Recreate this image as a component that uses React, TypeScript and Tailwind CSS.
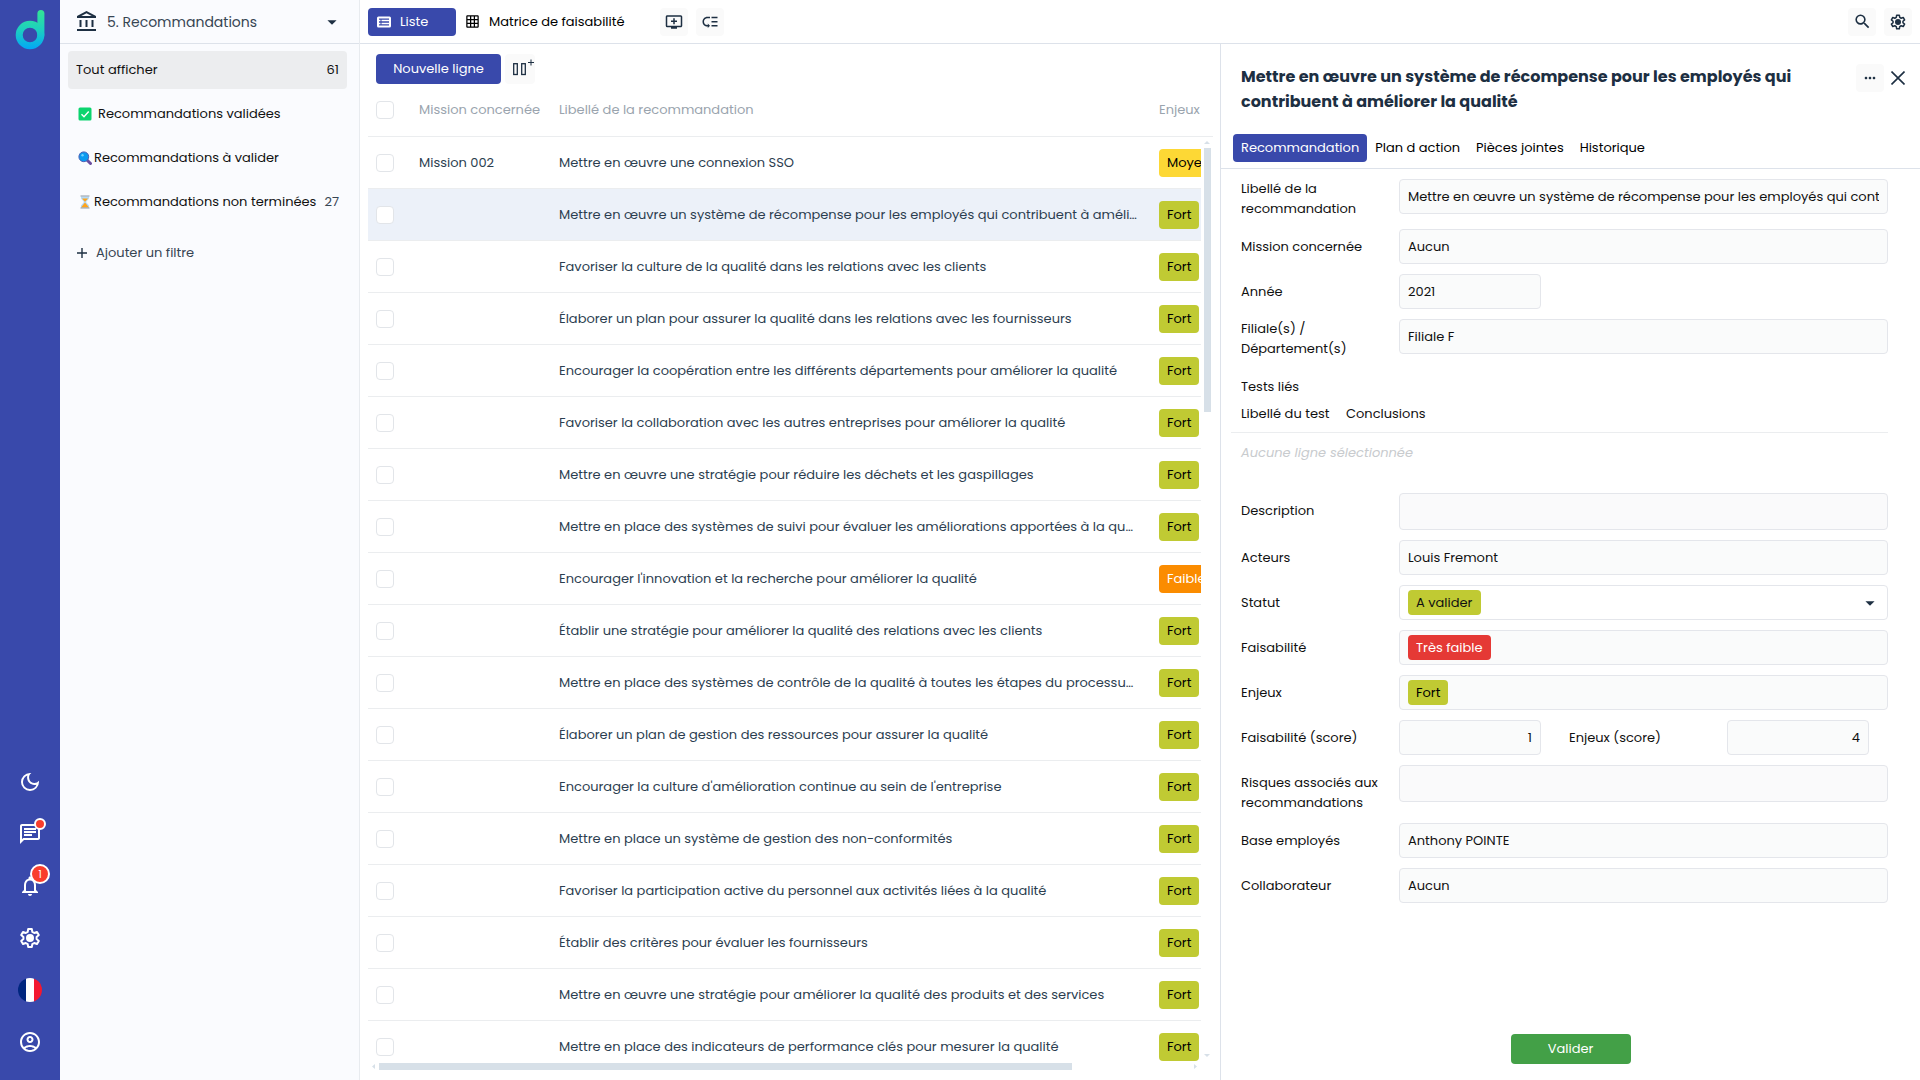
import type { ReactNode } from "react";
import {
  MdArrowDropDown,
  MdGridOn,
  MdLowPriority,
  MdMoreHoriz,
  MdNotificationsNone,
  MdOutlineAccountBalance,
  MdOutlineAccountCircle,
  MdOutlineAddToQueue,
  MdOutlineChat,
  MdOutlineDarkMode,
  MdSearch,
} from "react-icons/md";

const rows = [
  { label: "Mettre en œuvre une connexion SSO", mission: "Mission 002", stake: "Moyen" },
  { label: "Mettre en œuvre un système de récompense pour les employés qui contribuent à améliorer la qualité", stake: "Fort", selected: true },
  { label: "Favoriser la culture de la qualité dans les relations avec les clients", stake: "Fort" },
  { label: "Élaborer un plan pour assurer la qualité dans les relations avec les fournisseurs", stake: "Fort" },
  { label: "Encourager la coopération entre les différents départements pour améliorer la qualité", stake: "Fort" },
  { label: "Favoriser la collaboration avec les autres entreprises pour améliorer la qualité", stake: "Fort" },
  { label: "Mettre en œuvre une stratégie pour réduire les déchets et les gaspillages", stake: "Fort" },
  { label: "Mettre en place des systèmes de suivi pour évaluer les améliorations apportées à la qualité", stake: "Fort" },
  { label: "Encourager l'innovation et la recherche pour améliorer la qualité", stake: "Faible" },
  { label: "Établir une stratégie pour améliorer la qualité des relations avec les clients", stake: "Fort" },
  { label: "Mettre en place des systèmes de contrôle de la qualité à toutes les étapes du processus de production", stake: "Fort" },
  { label: "Élaborer un plan de gestion des ressources pour assurer la qualité", stake: "Fort" },
  { label: "Encourager la culture d'amélioration continue au sein de l'entreprise", stake: "Fort" },
  { label: "Mettre en place un système de gestion des non-conformités", stake: "Fort" },
  { label: "Favoriser la participation active du personnel aux activités liées à la qualité", stake: "Fort" },
  { label: "Établir des critères pour évaluer les fournisseurs", stake: "Fort" },
  { label: "Mettre en œuvre une stratégie pour améliorer la qualité des produits et des services", stake: "Fort" },
  { label: "Mettre en place des indicateurs de performance clés pour mesurer la qualité", stake: "Fort" },
];

const badgeColors: Record<string, string> = {
  Moyen: "bg-[#fdd835] text-black",
  Fort: "bg-[#c0ca33] text-black",
  Faible: "bg-[#fb8c00] text-white",
  "Très faible": "bg-[#e53935] text-white",
};

const fieldBox = "h-[35px] rounded border border-[#e4e6eb] bg-[#fafbfb] px-2";

function Logo() {
  return (
    <svg width="30" height="42" viewBox="0 0 30 42" fill="none">
      <defs>
        <linearGradient id="logo" x1="0" y1="0" x2="0" y2="42" gradientUnits="userSpaceOnUse">
          <stop stopColor="#35e592" />
          <stop offset="0.5" stopColor="#1ccfc0" />
          <stop offset="1" stopColor="#00a3fb" />
        </linearGradient>
      </defs>
      <circle cx="15" cy="26" r="10.8" stroke="url(#logo)" strokeWidth="7" />
      <path d="M25.9 4.5V26" stroke="url(#logo)" strokeWidth="7" strokeLinecap="round" />
    </svg>
  );
}

function GearIcon({ size }: { size: number }) {
  return (
    <svg width={size} height={size} viewBox="0 0 24 24">
      <path
        d="M10.2 3h3.6l.5 2.9 1.9 1.1 2.8-1 1.8 3.1-2.2 1.9v2l2.2 1.9-1.8 3.1-2.8-1-1.9 1.1-.5 2.9h-3.6l-.5-2.9L7.8 17 5 18l-1.8-3.1 2.2-1.9v-2L3.2 9.1 5 6l2.8 1 1.9-1.1z"
        fill="none"
        stroke="currentColor"
        strokeWidth="2"
        strokeLinejoin="round"
      />
      <circle cx="12" cy="12" r="4" fill="currentColor" />
    </svg>
  );
}

function ListIcon() {
  return (
    <svg width="14" height="12" viewBox="0 0 14 12" fill="none" stroke="currentColor">
      <rect x="1" y="1.5" width="12" height="9" rx="0.5" strokeWidth="2" />
      <path d="M4.5 4.5h8M4.5 7.5h8M1.5 4.5h2M1.5 7.5h2" strokeWidth="1.4" />
    </svg>
  );
}

function ColumnsIcon() {
  return (
    <svg width="30" height="30" viewBox="0 0 30 30" fill="none" stroke="currentColor" strokeWidth="1.3">
      <rect x="8.7" y="9.7" width="3.6" height="10.8" />
      <rect x="16.7" y="9.7" width="3.6" height="10.8" />
      <path d="M23 8.5h6M26 5.5v6" strokeWidth="1" />
    </svg>
  );
}

function CheckEmoji() {
  return (
    <svg width="14" height="14" viewBox="0 0 14 14">
      <rect x="0.5" y="0.5" width="13" height="13" rx="1.5" fill="#0bd46e" />
      <path d="M3.5 7.2 6 9.7l4.7-5.2" fill="none" stroke="#fff" strokeWidth="1.4" />
    </svg>
  );
}

function MagnifierEmoji() {
  return (
    <svg width="14" height="14" viewBox="0 0 14 14">
      <path d="m9 9 3.5 3.5" stroke="#6b4fa0" strokeWidth="3" strokeLinecap="round" />
      <circle cx="5.8" cy="5.8" r="4.9" fill="#0b9bf0" stroke="#4a5fb5" strokeWidth="1" />
      <circle cx="4.5" cy="4.3" r="1.2" fill="#6fd0ff" />
    </svg>
  );
}

function HourglassEmoji() {
  return (
    <svg width="14" height="14" viewBox="0 0 14 14">
      <path d="M3 1.5h8v2L8 7l3 3.5v2H3v-2L6 7 3 3.5z" fill="#b5daf5" />
      <path d="M4 3.5h6L7 6.8zM7 7.5l4 5H3z" fill="#ffa41c" />
      <path d="M2.5 1h9M2.5 13h9" stroke="#8d9aa5" strokeWidth="1.2" />
    </svg>
  );
}

function Badge({ value, className = "h-7" }: { value: string; className?: string }) {
  return (
    <span className={`inline-flex items-center rounded px-2 ${className} ${badgeColors[value]}`}>{value}</span>
  );
}

function ToolButton({ label, children }: { label: string; children: ReactNode }) {
  return (
    <button aria-label={label} className="flex size-7 items-center justify-center rounded bg-[#fafafa] text-[#1d2f42]">
      {children}
    </button>
  );
}

function RailButton({ label, children }: { label: string; children: ReactNode }) {
  return (
    <button aria-label={label} className="relative flex h-[52px] w-full items-center justify-center text-white">
      {children}
    </button>
  );
}

function Rail() {
  return (
    <nav className="flex w-[60px] shrink-0 flex-col items-center bg-[#3949ab] pt-[9px] pb-3">
      <Logo />
      <div className="mt-auto w-full">
        <RailButton label="Mode sombre">
          <MdOutlineDarkMode size={24} />
        </RailButton>
        <RailButton label="Messages">
          <MdOutlineChat size={24} />
          <span className="absolute top-[10px] left-[34px] size-3 rounded-full border-2 border-white bg-[#f93e2c]" />
        </RailButton>
        <RailButton label="Notifications">
          <MdNotificationsNone size={24} />
          <span className="absolute top-1 left-[30px] flex size-5 items-center justify-center rounded-full border-2 border-white bg-[#f93e2c] text-[10px]">
            1
          </span>
        </RailButton>
        <RailButton label="Paramètres">
          <GearIcon size={24} />
        </RailButton>
        <RailButton label="Français">
          <span className="flex size-6 overflow-hidden rounded-full">
            <span className="flex-1 bg-[#00267f]" />
            <span className="flex-1 bg-white" />
            <span className="flex-1 bg-[#f31830]" />
          </span>
        </RailButton>
        <RailButton label="Mon compte">
          <MdOutlineAccountCircle size={24} />
        </RailButton>
      </div>
    </nav>
  );
}

function Sidebar() {
  return (
    <aside className="w-[300px] shrink-0 border-r border-[#e8ebef] bg-[#fafbfe]">
      <div className="relative flex h-11 items-center border-b border-[#dde2ea] pl-[15px] text-[#1d2f42]">
        <MdOutlineAccountBalance size={24} />
        <select
          aria-label="Table"
          className="ml-2 h-10 flex-1 appearance-none bg-transparent text-sm text-[#374553] outline-none"
        >
          <option>5. Recommandations</option>
        </select>
        <MdArrowDropDown size={22} className="pointer-events-none absolute right-4" />
      </div>
      <div className="flex flex-col gap-1.5 py-[7px] pr-3 pl-2 text-[#111]">
        <button className="flex h-[38px] items-center justify-between rounded bg-[#ecedef] px-2">
          <span>Tout afficher</span>
          <span>61</span>
        </button>
        <button className="flex h-[38px] items-center gap-[6px] px-[10px]">
          <CheckEmoji />
          <span>Recommandations validées</span>
        </button>
        <button className="flex h-[38px] items-center gap-[2px] px-[10px]">
          <MagnifierEmoji />
          <span>Recommandations à valider</span>
        </button>
        <button className="flex h-[38px] items-center gap-[2px] pr-2 pl-[10px]">
          <HourglassEmoji />
          <span className="whitespace-nowrap">Recommandations non terminées</span>
          <span className="ml-auto text-[#374553]">27</span>
        </button>
        <button className="mt-[7px] flex h-[38px] items-center gap-[9px] px-[9px] text-[#374553]">
          <svg width="10" height="10" viewBox="0 0 10 10" stroke="#1d2f42" strokeWidth="1.4">
            <path d="M0 5h10M5 0v10" />
          </svg>
          <span>Ajouter un filtre</span>
        </button>
      </div>
    </aside>
  );
}

function TopBar() {
  return (
    <header className="flex h-11 shrink-0 items-center border-b border-[#dde2ea] px-2">
      <button className="flex h-7 w-[88px] items-center gap-[9px] rounded bg-[#3949ab] pl-[9px] text-white">
        <ListIcon />
        Liste
      </button>
      <button className="ml-[9px] flex h-7 items-center gap-[9px] text-black">
        <MdGridOn size={15} />
        Matrice de faisabilité
      </button>
      <div className="ml-[35px] flex gap-2">
        <ToolButton label="Ajouter une vue">
          <MdOutlineAddToQueue size={18} />
        </ToolButton>
        <ToolButton label="Réordonner">
          <MdLowPriority size={18} />
        </ToolButton>
      </div>
      <div className="ml-auto flex gap-2">
        <ToolButton label="Rechercher">
          <MdSearch size={19} />
        </ToolButton>
        <ToolButton label="Configurer">
          <GearIcon size={18} />
        </ToolButton>
      </div>
    </header>
  );
}

function CheckBox({ label }: { label: string }) {
  return (
    <input
      type="checkbox"
      aria-label={label}
      className="block size-[18px] appearance-none rounded border border-[#e2e5e9] bg-white"
    />
  );
}

function ListView() {
  return (
    <section className="flex min-w-0 flex-1 flex-col pl-2">
      <div className="flex h-10 shrink-0 items-end gap-1 pl-2">
        <button className="h-[30px] w-[125px] rounded bg-[#3949ab] text-white">Nouvelle ligne</button>
        <button aria-label="Ajouter une colonne" className="size-[30px] rounded bg-[#fafafa] text-[#1d2f42]">
          <ColumnsIcon />
        </button>
      </div>
      <div className="flex min-h-0 flex-1 pr-[7px]">
        <div className="min-w-0 flex-1 overflow-hidden">
          <table className="w-[941px] table-fixed text-left text-[#2c3e50]">
            <thead>
              <tr className="h-[52px] border-b border-[#ebedef] text-[#9aa4ae]">
                <th className="w-[51px] pl-2">
                  <CheckBox label="Tout sélectionner" />
                </th>
                <th className="w-[140px] font-normal whitespace-nowrap">Mission concernée</th>
                <th className="w-[600px] font-normal">Libellé de la recommandation</th>
                <th className="w-[150px] font-normal">Enjeux</th>
              </tr>
            </thead>
            <tbody>
              {rows.map((row) => (
                <tr key={row.label} className={`h-[52px] border-b border-[#ebedef] ${row.selected ? "bg-[#ecf1f9]" : ""}`}>
                  <td className="pt-0.5 pl-2">
                    <CheckBox label={row.label} />
                  </td>
                  <td className="pt-0.5">{row.mission}</td>
                  <td className="truncate pt-0.5 pr-5">{row.label}</td>
                  <td className="pt-0.5">
                    <Badge value={row.stake} />
                  </td>
                </tr>
              ))}
            </tbody>
          </table>
        </div>
        {/* Vertical scrollbar */}
        <div className="flex w-3 shrink-0 flex-col items-center text-[#d7e0e8]">
          <div className="h-[53px] w-full border-b border-[#ebedef]" />
          <svg width="6" height="3" viewBox="0 0 6 3" className="my-1 shrink-0" fill="currentColor">
            <path d="M0 3 3 0l3 3z" />
          </svg>
          <div className="h-[264px] w-[7px] shrink-0 bg-[#d7e0e8]" />
          <svg width="6" height="3" viewBox="0 0 6 3" className="mt-auto mb-1 shrink-0" fill="currentColor">
            <path d="M0 0h6L3 3z" />
          </svg>
        </div>
      </div>
      {/* Horizontal scrollbar */}
      <div className="flex h-[19px] shrink-0 items-start gap-1 pt-0.5 pr-[23px] pl-1 text-[#d7e0e8]">
        <svg width="3" height="7" viewBox="0 0 3 7" fill="currentColor">
          <path d="M3 1v5L0 3.5z" />
        </svg>
        <div className="h-[7px] w-[84%] bg-[#d7e0e8]" />
        <svg width="3" height="7" viewBox="0 0 3 7" className="ml-auto" fill="currentColor">
          <path d="M0 1v5l3-2.5z" />
        </svg>
      </div>
    </section>
  );
}

function Field({ id, label, tall, children }: { id: string; label: string; tall?: boolean; children: ReactNode }) {
  return (
    <div className="flex items-start">
      <label htmlFor={id} className={`w-[158px] shrink-0 pr-4 leading-5 ${tall ? "" : "pt-2"}`}>
        {label}
      </label>
      {children}
    </div>
  );
}

function TextField({ id, label, value, tall }: { id: string; label: string; value: string; tall?: boolean }) {
  return (
    <Field id={id} label={label} tall={tall}>
      <input id={id} defaultValue={value} className={`min-w-0 flex-1 ${fieldBox}`} />
    </Field>
  );
}

function DetailPanel() {
  return (
    <section className="flex w-[700px] shrink-0 flex-col border-l border-[#dde2ea] text-[#111]">
      <div className="flex items-start pt-5 pr-3 pl-5 text-[#1d2f42]">
        <h1 className="flex-1 pr-8 text-base leading-[25px] font-bold">
          Mettre en œuvre un système de récompense pour les employés qui contribuent à améliorer la qualité
        </h1>
        <div className="flex items-center gap-1">
          <ToolButton label="Plus d'actions">
            <MdMoreHoriz size={16} />
          </ToolButton>
          <button aria-label="Fermer" className="flex size-5 items-center justify-center">
            <svg width="14" height="14" viewBox="0 0 14 14" stroke="currentColor" strokeWidth="1.6">
              <path d="m.5.5 13 13M13.5.5l-13 13" />
            </svg>
          </button>
        </div>
      </div>
      <div className="mt-5 flex h-[35px] shrink-0 gap-4 border-b border-[#dde2ea] pl-3 text-black">
        <button className="-mr-2 h-7 rounded bg-[#3949ab] px-2 text-white">Recommandation</button>
        <button className="h-7">Plan d action</button>
        <button className="h-7">Pièces jointes</button>
        <button className="h-7">Historique</button>
      </div>

      <form className="flex flex-col gap-[10px] pt-[10px] pr-8 pl-5">
        <TextField
          id="libelle"
          label="Libellé de la recommandation"
          value="Mettre en œuvre un système de récompense pour les employés qui contribuent à améliorer la qualité"
          tall
        />
        <TextField id="mission" label="Mission concernée" value="Aucun" />
        <Field id="annee" label="Année">
          <input id="annee" defaultValue="2021" className={`w-[142px] ${fieldBox}`} />
        </Field>
        <TextField id="filiale" label="Filiale(s) / Département(s)" value="Filiale F" tall />

        <div className="h-[114px] pt-2">
          <h2 className="leading-5">Tests liés</h2>
          <table className="mt-1 -ml-[10px] w-[657px] text-left">
            <thead>
              <tr className="h-[31px] border-b border-[#ebedef]">
                <th className="w-[105px] pb-1.5 pl-[10px] font-normal whitespace-nowrap">Libellé du test</th>
                <th className="pb-1.5 pl-[10px] font-normal">Conclusions</th>
              </tr>
            </thead>
            <tbody>
              <tr className="h-10">
                <td colSpan={2} className="pl-[10px] text-[#c8cbce] italic">
                  Aucune ligne sélectionnée
                </td>
              </tr>
            </tbody>
          </table>
        </div>

        <Field id="description" label="Description">
          <textarea
            id="description"
            className="block h-[37px] flex-1 resize-none rounded border border-[#e4e6eb] bg-[#fafafb] px-2"
          />
        </Field>
        <TextField id="acteurs" label="Acteurs" value="Louis Fremont" />
        <Field id="statut" label="Statut">
          <div className="flex h-[35px] flex-1 items-center rounded border border-[#e4e6eb] bg-white pr-1.5 pl-2">
            <select id="statut" className="h-[25px] appearance-none rounded bg-[#c0ca33] px-2 outline-none">
              <option>A valider</option>
            </select>
            <MdArrowDropDown size={22} className="pointer-events-none ml-auto text-[#1d2f42]" />
          </div>
        </Field>
        <Field id="faisabilite" label="Faisabilité">
          <output id="faisabilite" className={`flex flex-1 items-center ${fieldBox}`}>
            <Badge value="Très faible" className="h-[25px]" />
          </output>
        </Field>
        <Field id="enjeux" label="Enjeux">
          <output id="enjeux" className={`flex flex-1 items-center ${fieldBox}`}>
            <Badge value="Fort" className="h-[25px]" />
          </output>
        </Field>
        <div className="flex gap-7">
          <Field id="faisabilite-score" label="Faisabilité (score)">
            <input id="faisabilite-score" defaultValue="1" className={`w-[142px] text-right ${fieldBox}`} />
          </Field>
          <Field id="enjeux-score" label="Enjeux (score)">
            <input id="enjeux-score" defaultValue="4" className={`w-[142px] text-right ${fieldBox}`} />
          </Field>
        </div>
        <Field id="risques" label="Risques associés aux recommandations">
          <textarea
            id="risques"
            className="block h-[37px] flex-1 resize-none rounded border border-[#e4e6eb] bg-[#fafafb] px-2"
          />
        </Field>
        <TextField id="base" label="Base employés" value="Anthony POINTE" />
        <TextField id="collaborateur" label="Collaborateur" value="Aucun" />
      </form>

      <div className="mt-auto flex justify-center pb-4">
        <button className="h-[30px] w-[120px] rounded bg-[#43a047] text-white">Valider</button>
      </div>
    </section>
  );
}

export default function App() {
  return (
    <div className="flex h-screen overflow-hidden bg-white font-['Poppins','Inter',sans-serif] text-[13px]">
      <Rail />
      <Sidebar />
      <main className="flex min-w-0 flex-1 flex-col">
        <TopBar />
        <div className="flex min-h-0 flex-1">
          <ListView />
          <DetailPanel />
        </div>
      </main>
    </div>
  );
}
